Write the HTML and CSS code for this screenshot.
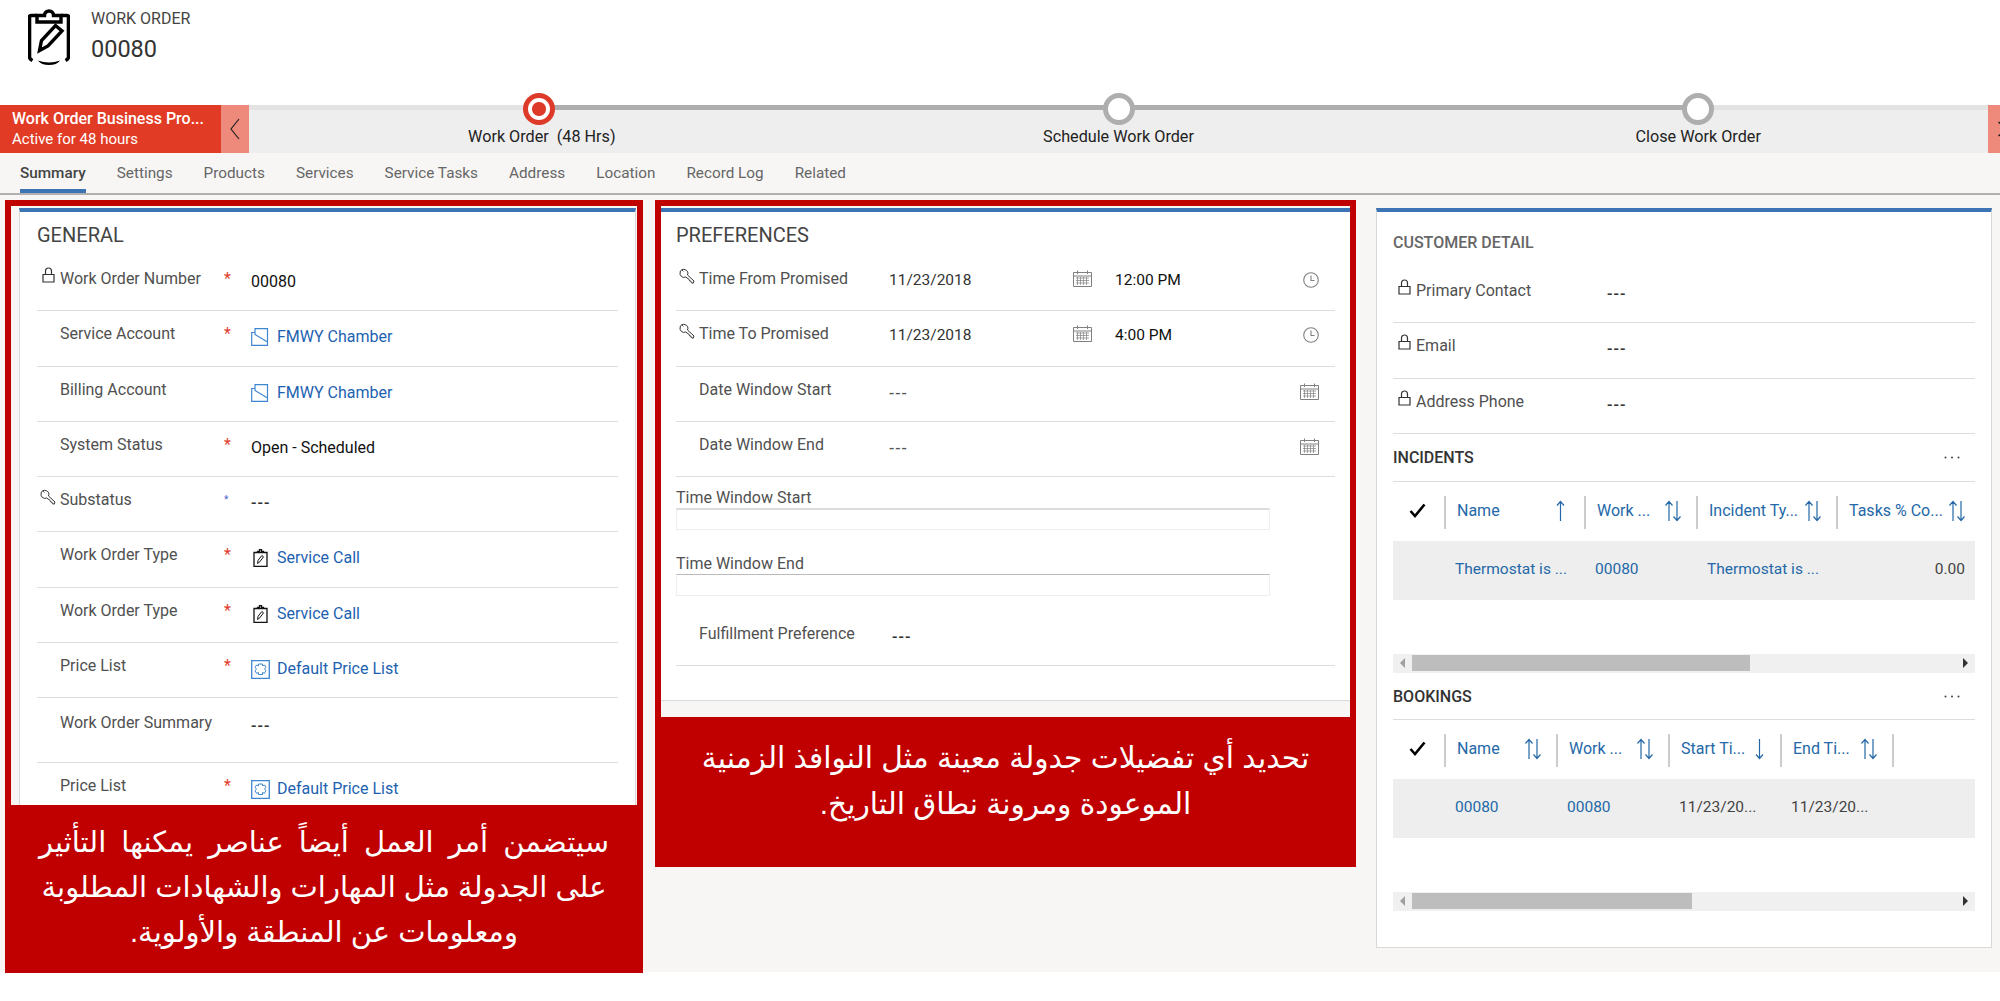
FILE: index.html
```html
<!DOCTYPE html>
<html>
<head>
    <title>Work Order 00080</title>
    <link rel="stylesheet" href="styles.css">
</head>
<body>
    <!-- Shared icons -->
    <svg class="defs" width="0" height="0">
        <symbol id="i-lock" viewBox="0 0 13 16"><path d="M1 7.500h11v7.500h-11zM3.500 7.500v-3.500a3 3 0 0 1 6 0v3.500" fill="none" stroke="currentColor" stroke-width="1.200"/></symbol>
        <symbol id="i-key" viewBox="0 0 16 17"><path d="M1 5a4 4 0 1 1 7.500 3l6.500 6-.8 2.200-1.900-.6-.4-1.500-1.400-.3-.3-1.300-3.500-2.500a4 4 0 0 1-5.500-4.900zM3.200 3.200l1.200 1.200" fill="none" stroke="currentColor" stroke-width="1"/></symbol>
        <symbol id="i-cal" viewBox="0 0 19 17"><path d="M.5 2.500h18v14h-18zM.5 6h18M4.500 .5v3.500M14.500 .5v3.500" fill="none" stroke="currentColor"/><path d="M3 8h13M3 10.500h13M3 13h13M4.500 7v8M7.500 7v8M10.500 7v8M13.500 7v8" fill="none" stroke="currentColor" stroke-width=".7"/></symbol>
        <symbol id="i-clock" viewBox="0 0 16 16"><circle cx="8" cy="8" r="7.300" fill="none" stroke="currentColor" stroke-width="1.100"/><path d="M8 3.500v5h3.500" fill="none" stroke="currentColor" stroke-width="1.100"/></symbol>
        <symbol id="i-account" viewBox="0 0 18 18"><path d="M.7 4.500h3.300v-3.800h12.500v16.600h-15.800zM4 4.500v2l12.500 7.500" fill="none" stroke="currentColor" stroke-width="1.200"/></symbol>
        <symbol id="i-price" viewBox="0 0 19 19"><path d="M.7 .7h17.600v17.600h-17.600z" fill="none" stroke="currentColor" stroke-width="1.300"/><path d="M7.500 4h4v1.800l2-.8 1.500 2.500-1.600 1.500 1.600 1.500-1.500 2.800-2-.8v2h-4v-2l-2 .8-1.500-2.800 1.600-1.500-1.600-1.500 1.500-2.500 2 .8z" fill="none" stroke="currentColor"/></symbol>
        <symbol id="i-task" viewBox="0 0 15 18"><path d="M1 3.500h13v14h-13zM4.500 3.500v-1.200h2v-1.600h2v1.600h2v1.200z" fill="none" stroke="#111" stroke-width="1.300"/><path d="M4.500 14.500l.6-3.200 3.700-4.800 1.700 1.300-3.700 5z" fill="none" stroke="#111"/></symbol>
        <symbol id="i-sort" viewBox="0 0 18 22"><path d="M5 21v-19M1.500 5.500l3.500-4 3.500 4M13 1v19M9.500 16.500l3.500 4 3.500-4" fill="none" stroke="currentColor" stroke-width="1.200"/></symbol>
        <symbol id="i-up" viewBox="0 0 9 22"><path d="M4.500 21v-19M1 5.500l3.500-4 3.500 4" fill="none" stroke="currentColor" stroke-width="1.200"/></symbol>
        <symbol id="i-down" viewBox="0 0 9 22"><path d="M4.500 1v19M1 16.500l3.500 4 3.500-4" fill="none" stroke="currentColor" stroke-width="1.200"/></symbol>
        <symbol id="i-check" viewBox="0 0 17 15"><path d="M1.500 8l4.500 5 9.500-11.500" fill="none" stroke="currentColor" stroke-width="2.600"/></symbol>
        <symbol id="i-dots" viewBox="0 0 16 3"><circle cx="1.500" cy="1.500" r="1"/><circle cx="8" cy="1.500" r="1"/><circle cx="14.500" cy="1.500" r="1"/></symbol>
    </svg>

    <header class="page-head">
        <svg class="head-icon" viewBox="0 0 42 56">
            <path d="M9 6.500h-6a1.500 1.500 0 0 0-1.500 1.500v40c0 1.500 1 2.500 3 3.500M33 6.500h6a1.500 1.500 0 0 1 1.500 1.500v40c0 1.500-1 2.500-3 3.500" fill="none" stroke="#000" stroke-width="3.600"/>
            <path d="M9 6.500h7.500c0-6 9-6 9 0h7.500v6.500h-24z" fill="none" stroke="#000" stroke-width="3.400"/>
            <path d="M11.500 41.500l2-10 14-15 6.500 5.500-14 15z" fill="none" stroke="#000" stroke-width="3.400"/>
            <path d="M10 51.500c7 2.500 15 2.500 22 0c-2 3-6 4.500-11 4.500s-9-1.500-11-4.500z"/>
        </svg>
        <div class="head-text">
            <div class="head-type">WORK ORDER</div>
            <div class="head-name">00080</div>
        </div>
    </header>

    <section class="bpf">
        <div class="bpf-title">
            <div class="bpf-name">Work Order Business Pro...</div>
            <div class="bpf-age">Active for 48 hours</div>
        </div>
        <div class="bpf-prev">
            <svg width="10" height="22" viewBox="0 0 10 22"><path d="M9 1l-8 10 8 10" fill="none" stroke="#222" stroke-width="1.200"/></svg>
        </div>
        <div class="bpf-stages">
            <div class="stage">
                <span class="node node-active"></span>
                <span class="stage-label stage-label-first">Work Order&nbsp; (48 Hrs)</span>
            </div>
            <div class="stage">
                <span class="node"></span>
                <span class="stage-label">Schedule Work Order</span>
            </div>
            <div class="stage">
                <span class="node"></span>
                <span class="stage-label">Close Work Order</span>
            </div>
        </div>
        <div class="bpf-next">
            <svg width="12" height="48" viewBox="0 0 12 48"><path d="M10.500 17l8 7-8 7" fill="none" stroke="#222" stroke-width="1.500"/></svg>
        </div>
    </section>

    <nav class="tabs">
        <a class="tab tab-on">Summary</a>
        <a class="tab">Settings</a>
        <a class="tab">Products</a>
        <a class="tab">Services</a>
        <a class="tab">Service Tasks</a>
        <a class="tab">Address</a>
        <a class="tab">Location</a>
        <a class="tab">Record Log</a>
        <a class="tab">Related</a>
    </nav>

    <main class="main">
        <div class="callout callout-general">
            <div class="callout-view view-general">
                <section class="card">
                    <h2 class="card-title">GENERAL</h2>
                    <div class="row">
                        <svg class="lead"><use href="#i-lock"/></svg>
                        <span class="label">Work Order Number</span>
                        <span class="star">*</span>
                        <span class="value value-dark">00080</span>
                    </div>
                    <div class="row">
                        <span class="lead"></span>
                        <span class="label">Service Account</span>
                        <span class="star">*</span>
                        <a class="value link"><svg class="ico-blue"><use href="#i-account"/></svg>FMWY Chamber</a>
                    </div>
                    <div class="row">
                        <span class="lead"></span>
                        <span class="label">Billing Account</span>
                        <span></span>
                        <a class="value link"><svg class="ico-blue"><use href="#i-account"/></svg>FMWY Chamber</a>
                    </div>
                    <div class="row">
                        <span class="lead"></span>
                        <span class="label">System Status</span>
                        <span class="star">*</span>
                        <span class="value value-dark">Open - Scheduled</span>
                    </div>
                    <div class="row">
                        <svg class="lead lead-key"><use href="#i-key"/></svg>
                        <span class="label">Substatus</span>
                        <span class="star star-blue">*</span>
                        <span class="value dash">---</span>
                    </div>
                    <div class="row">
                        <span class="lead"></span>
                        <span class="label">Work Order Type</span>
                        <span class="star">*</span>
                        <a class="value link"><svg class="ico-task"><use href="#i-task"/></svg>Service Call</a>
                    </div>
                    <div class="row">
                        <span class="lead"></span>
                        <span class="label">Work Order Type</span>
                        <span class="star">*</span>
                        <a class="value link"><svg class="ico-task"><use href="#i-task"/></svg>Service Call</a>
                    </div>
                    <div class="row">
                        <span class="lead"></span>
                        <span class="label">Price List</span>
                        <span class="star">*</span>
                        <a class="value link"><svg class="ico-price"><use href="#i-price"/></svg>Default Price List</a>
                    </div>
                    <div class="row row-tall">
                        <span class="lead"></span>
                        <span class="label">Work Order Summary</span>
                        <span></span>
                        <span class="value dash">---</span>
                    </div>
                    <div class="row">
                        <span class="lead"></span>
                        <span class="label">Price List</span>
                        <span class="star">*</span>
                        <a class="value link"><svg class="ico-price"><use href="#i-price"/></svg>Default Price List</a>
                    </div>
                </section>
            </div>
            <p class="caption caption-general" lang="ar" dir="rtl"><span class="line-wide">سيتضمن أمر العمل أيضاً عناصر يمكنها التأثير</span><br>على الجدولة مثل المهارات والشهادات المطلوبة<br>ومعلومات عن المنطقة والأولوية.</p>
        </div>

        <div class="callout callout-prefs">
            <div class="callout-view view-prefs">
                <section class="card card-prefs">
                    <h2 class="card-title">PREFERENCES</h2>
                    <div class="row">
                        <svg class="lead lead-key"><use href="#i-key"/></svg>
                        <span class="label">Time From Promised</span>
                        <span></span>
                        <div class="value datetime">
                            <span class="date">11/23/2018</span>
                            <svg class="ico-cal"><use href="#i-cal"/></svg>
                            <span class="time">12:00 PM</span>
                            <svg class="ico-clock"><use href="#i-clock"/></svg>
                        </div>
                    </div>
                    <div class="row">
                        <svg class="lead lead-key"><use href="#i-key"/></svg>
                        <span class="label">Time To Promised</span>
                        <span></span>
                        <div class="value datetime">
                            <span class="date">11/23/2018</span>
                            <svg class="ico-cal"><use href="#i-cal"/></svg>
                            <span class="time">4:00 PM</span>
                            <svg class="ico-clock"><use href="#i-clock"/></svg>
                        </div>
                    </div>
                    <div class="row">
                        <span class="lead"></span>
                        <span class="label">Date Window Start</span>
                        <span></span>
                        <div class="value datetime value-soft">
                            <span class="dash">---</span>
                            <svg class="ico-cal"><use href="#i-cal"/></svg>
                        </div>
                    </div>
                    <div class="row">
                        <span class="lead"></span>
                        <span class="label">Date Window End</span>
                        <span></span>
                        <div class="value datetime value-soft">
                            <span class="dash">---</span>
                            <svg class="ico-cal"><use href="#i-cal"/></svg>
                        </div>
                    </div>
                    <div class="field">
                        <div class="field-label">Time Window Start</div>
                        <div class="field-box"></div>
                    </div>
                    <div class="field">
                        <div class="field-label">Time Window End</div>
                        <div class="field-box"></div>
                    </div>
                    <div class="row row-fulfil">
                        <span class="lead"></span>
                        <span class="label">Fulfillment Preference</span>
                        <span></span>
                        <span class="value dash">---</span>
                    </div>
                </section>
            </div>
            <p class="caption caption-prefs" lang="ar" dir="rtl">تحديد أي تفضيلات جدولة معينة مثل النوافذ الزمنية<br>الموعودة ومرونة نطاق التاريخ.</p>
        </div>

        <section class="card card-customer">
            <h3 class="customer-title">CUSTOMER DETAIL</h3>
            <div class="row">
                <svg class="lead"><use href="#i-lock"/></svg>
                <span class="label">Primary Contact</span>
                <span></span>
                <span class="value dash">---</span>
            </div>
            <div class="row">
                <svg class="lead"><use href="#i-lock"/></svg>
                <span class="label">Email</span>
                <span></span>
                <span class="value dash">---</span>
            </div>
            <div class="row">
                <svg class="lead"><use href="#i-lock"/></svg>
                <span class="label">Address Phone</span>
                <span></span>
                <span class="value dash">---</span>
            </div>

            <div class="sub-head">
                <span>INCIDENTS</span>
                <svg class="dots"><use href="#i-dots"/></svg>
            </div>
            <div class="grid-head cols-incidents">
                <svg class="check"><use href="#i-check"/></svg>
                <div class="th">Name<svg class="arrow arrow-up"><use href="#i-up"/></svg></div>
                <div class="th">Work ...<svg class="arrows"><use href="#i-sort"/></svg></div>
                <div class="th">Incident Ty...<svg class="arrows"><use href="#i-sort"/></svg></div>
                <div class="th th-last">Tasks % Co...<svg class="arrows"><use href="#i-sort"/></svg></div>
            </div>
            <div class="grid-row cols-incidents">
                <span></span>
                <a class="td link">Thermostat is ...</a>
                <a class="td link">00080</a>
                <a class="td link">Thermostat is ...</a>
                <span class="td td-num">0.00</span>
            </div>
            <div class="scrollbar">
                <span class="tri tri-left"></span>
                <div class="track"><div class="thumb thumb-incidents"></div></div>
                <span class="tri tri-right"></span>
            </div>

            <div class="sub-head sub-head-next">
                <span>BOOKINGS</span>
                <svg class="dots"><use href="#i-dots"/></svg>
            </div>
            <div class="grid-head cols-bookings">
                <svg class="check"><use href="#i-check"/></svg>
                <div class="th">Name<svg class="arrows"><use href="#i-sort"/></svg></div>
                <div class="th">Work ...<svg class="arrows"><use href="#i-sort"/></svg></div>
                <div class="th">Start Ti...<svg class="arrow"><use href="#i-down"/></svg></div>
                <div class="th">End Ti...<svg class="arrows"><use href="#i-sort"/></svg></div>
                <div class="th"></div>
            </div>
            <div class="grid-row cols-bookings">
                <span></span>
                <a class="td link">00080</a>
                <a class="td link">00080</a>
                <span class="td">11/23/20...</span>
                <span class="td">11/23/20...</span>
                <span></span>
            </div>
            <div class="scrollbar">
                <span class="tri tri-left"></span>
                <div class="track"><div class="thumb thumb-bookings"></div></div>
                <span class="tri tri-right"></span>
            </div>
        </section>
    </main>
</body>
</html>
```
FILE: styles.css
```css
* {
    box-sizing: border-box;
}

html, body {
    height: 100%;
}

body {
    margin: 0;
    overflow: hidden;
    background-color: white;
    font-family: Roboto, "Open Sans", sans-serif;
    font-size: 16px;
    color: #505050;
}

.defs {
    position: absolute;
}

/* Page header */
.page-head {
    display: flex;
    height: 105px;
    padding: 9px 0 0 28px;
}

.head-icon {
    width: 42px;
    height: 56px;
}

.head-text {
    margin-left: 21px;
    color: #444;
}

.head-type {
    font-size: 16px;
    line-height: 20px;
}

.head-name {
    margin-top: 5px;
    font-size: 23.500px;
    line-height: 30px;
    color: #333;
}

/* Business process bar */
.bpf {
    display: flex;
    height: 48px;
}

.bpf-title {
    width: 221px;
    padding: 3px 0 0 12px;
    background-color: #e23b25;
    color: white;
}

.bpf-name {
    font-size: 16px;
    font-weight: 500;
    line-height: 21px;
    white-space: nowrap;
}

.bpf-age {
    font-size: 15px;
    line-height: 21px;
}

.bpf-prev {
    display: flex;
    align-items: center;
    justify-content: center;
    width: 28px;
    background-color: #ed8a7c;
}

.bpf-stages {
    position: relative;
    flex: 1;
    display: flex;
    background-color: #eee;
    border-top: 5px solid #e3e3e3;
}

.bpf-stages::before {
    content: "";
    position: absolute;
    top: -5px;
    left: 16.67%;
    right: 16.67%;
    height: 5px;
    background-color: #aeaeae;
}

.bpf-next {
    width: 12px;
    overflow: hidden;
    background-color: #ed8a7c;
}

.stage {
    position: relative;
    flex: 1;
    display: flex;
    flex-direction: column;
    align-items: center;
    margin-top: -17px;
}

.node {
    width: 32px;
    height: 32px;
    border: 5px solid #aeaeae;
    border-radius: 50%;
    background-color: white;
}

.node-active {
    border-color: #dd3a2a;
    background: radial-gradient(circle, #dd3a2a 0 6.500px, white 7.500px);
}

.stage-label {
    margin-top: 2px;
    font-size: 16.200px;
    line-height: 20px;
    color: #222;
}

.stage-label-first {
    margin-left: 6px;
}

/* Tabs */
.tabs {
    display: flex;
    gap: 31px;
    height: 42px;
    padding-left: 20px;
    background-color: #f7f6f5;
    border-bottom: 2px solid #b0b0b0;
}

.tab {
    height: 40px;
    padding-top: 9px;
    font-size: 15.300px;
    line-height: 22px;
    color: #666;
}

.tab-on {
    font-weight: 500;
    color: #444;
    border-bottom: 4px solid #3b73b3;
}

/* Main area */
.main {
    display: flex;
    align-items: flex-start;
    height: 777px;
    padding: 5px 0 0 5px;
    background-color: #f7f6f5;
}

.callout {
    border: 6px solid #c00000;
    border-bottom: 0;
    background-color: #c00000;
}

.callout-general {
    width: 638px;
}

.callout-prefs {
    width: 701px;
    margin-left: 12px;
}

.callout-view {
    overflow: hidden;
    background-color: #f7f6f5;
}

.view-general {
    height: 599px;
    padding: 2px 1px 0 8px;
}

.view-prefs {
    height: 511px;
    padding-top: 2px;
}

.caption {
    margin: 0;
    background-color: #c00000;
    color: white;
    font-family: "Liberation Sans", "DejaVu Sans", sans-serif;
    font-size: 29px;
    line-height: 45px;
    text-align: center;
}

.caption-general {
    height: 168px;
    padding-top: 15px;
}

.line-wide {
    word-spacing: 7px;
}

.caption-prefs {
    height: 150px;
    padding-top: 18px;
    font-size: 29.700px;
    line-height: 46px;
}

.card {
    background-color: white;
    border: 1px solid #d9d9d9;
    border-top: 4px solid #3b73b3;
    padding: 0 17px;
}

.card-prefs {
    height: 493px;
    padding: 0 15px;
    border-left: 0;
    border-right: 0;
}

.card-customer {
    width: 616px;
    height: 740px;
    margin: 8px 0 0 20px;
    padding: 0 16px;
}

.card-title {
    height: 44px;
    margin: 0;
    padding-top: 10px;
    font-size: 20px;
    font-weight: 400;
    line-height: 26px;
    color: #444;
}

.customer-title {
    height: 56px;
    margin: 0;
    padding-top: 20px;
    font-size: 16px;
    font-weight: 500;
    line-height: 22px;
    color: #666;
}

/* Form rows */
.row {
    display: grid;
    grid-template-columns: 23px 164px 27px 1fr;
    height: 55.300px;
    padding-top: 13px;
    border-bottom: 1.500px solid #ddd;
    line-height: 20px;
}

.row-tall {
    height: 65px;
    padding-top: 15px;
}

.row-fulfil {
    height: 56px;
    padding-top: 14px;
}

.row-fulfil .value {
    margin-left: 2px;
}

.lead {
    width: 13px;
    height: 16px;
    margin: -2px 0 0 5px;
    color: #333;
}

.lead-key {
    width: 16px;
    height: 17px;
    margin: -2px 0 0 3px;
}

.label {
    white-space: nowrap;
}

.star {
    color: #e03c2c;
}

.star-blue {
    color: #4a5fd0;
    font-size: 10px;
}

.value {
    display: flex;
    align-items: center;
    height: 20px;
    margin-top: 3px;
    color: #333;
    white-space: nowrap;
}

.value-dark {
    color: #111;
}

.dash {
    letter-spacing: 1px;
    font-weight: 500;
}

.link {
    color: #1d62b0;
}

.ico-blue {
    width: 18px;
    height: 18px;
    margin-right: 8px;
    color: #3f86d0;
}

.ico-price {
    width: 19px;
    height: 19px;
    margin-right: 7px;
    color: #3f86d0;
}

.ico-task {
    width: 15px;
    height: 18px;
    margin: 0 9px 0 2px;
}

.datetime {
    margin: 1px 0 0 -1px;
    padding-right: 16px;
    font-size: 15.500px;
}

.value-soft {
    justify-content: space-between;
    margin-top: 3px;
    color: #555;
}

.date {
    width: 184px;
}

.ico-cal {
    width: 19px;
    height: 17px;
    margin-bottom: 3px;
    color: #808080;
}

.time {
    flex: 1;
    margin-left: 23px;
    color: #111;
}

.ico-clock {
    width: 16px;
    height: 16px;
    margin-bottom: 1px;
    color: #808080;
}

.field {
    height: 66px;
    padding-top: 11px;
}

.field + .field {
    height: 67px;
}

.field-label {
    line-height: 20px;
}

.field-box {
    width: 594px;
    height: 22px;
    border: 1px solid #eee;
    border-top: 2px solid #dcdcdc;
}

.field + .field .field-box {
    border-top: 1px solid #bbb;
}

/* Sub-grids on the right */
.sub-head {
    display: flex;
    align-items: center;
    justify-content: space-between;
    height: 48px;
    padding: 1px 15px 0 0;
    border-bottom: 1.500px solid #ddd;
    font-size: 16px;
    font-weight: 500;
    color: #333;
}

.sub-head-next {
    height: 47px;
    border-bottom-width: 1px;
}

.dots {
    width: 16px;
    height: 3px;
    fill: #444;
}

.grid-head {
    display: grid;
    height: 33px;
    margin-top: 14px;
    color: #2468a8;
}

.grid-row {
    display: grid;
    align-items: center;
    height: 59px;
    padding-bottom: 3px;
    margin-top: 12px;
    background-color: #eee;
}

.cols-incidents {
    grid-template-columns: 51px 140px 112px 140px 139px;
}

.cols-bookings {
    grid-template-columns: 51px 112px 112px 112px 112px 1fr;
}

.check {
    width: 17px;
    height: 15px;
    margin: 7px 0 0 16px;
    color: #000;
}

.th {
    display: flex;
    align-items: center;
    justify-content: space-between;
    padding: 0 14px 3px 11px;
    border-left: 2px solid #ccc;
    white-space: nowrap;
}

.th-last {
    padding-right: 9px;
}

.arrows {
    flex: none;
    width: 18px;
    height: 22px;
}

.arrow {
    flex: none;
    width: 9px;
    height: 22px;
    margin-right: 2px;
}

.arrow-up {
    margin-right: 5px;
}

.td {
    padding-left: 11px;
    font-size: 15.500px;
    white-space: nowrap;
    color: #444;
}

.td.link {
    color: #2468a8;
}

.td-num {
    padding-right: 10px;
    text-align: right;
}

.scrollbar {
    display: flex;
    align-items: center;
    height: 19px;
    margin-top: 54px;
    background-color: #f0f0f0;
}

.track {
    flex: 1;
    height: 16px;
}

.thumb {
    height: 16px;
    background-color: #bdbdbd;
}

.thumb-incidents {
    width: 338px;
}

.thumb-bookings {
    width: 280px;
}

.tri {
    width: 19px;
    display: flex;
    justify-content: center;
}

.tri::before {
    content: "";
    border-top: 5px solid transparent;
    border-bottom: 5px solid transparent;
}

.tri-left::before {
    border-right: 5px solid #a0a0a0;
}

.tri-right::before {
    border-left: 5px solid #333;
}
```
